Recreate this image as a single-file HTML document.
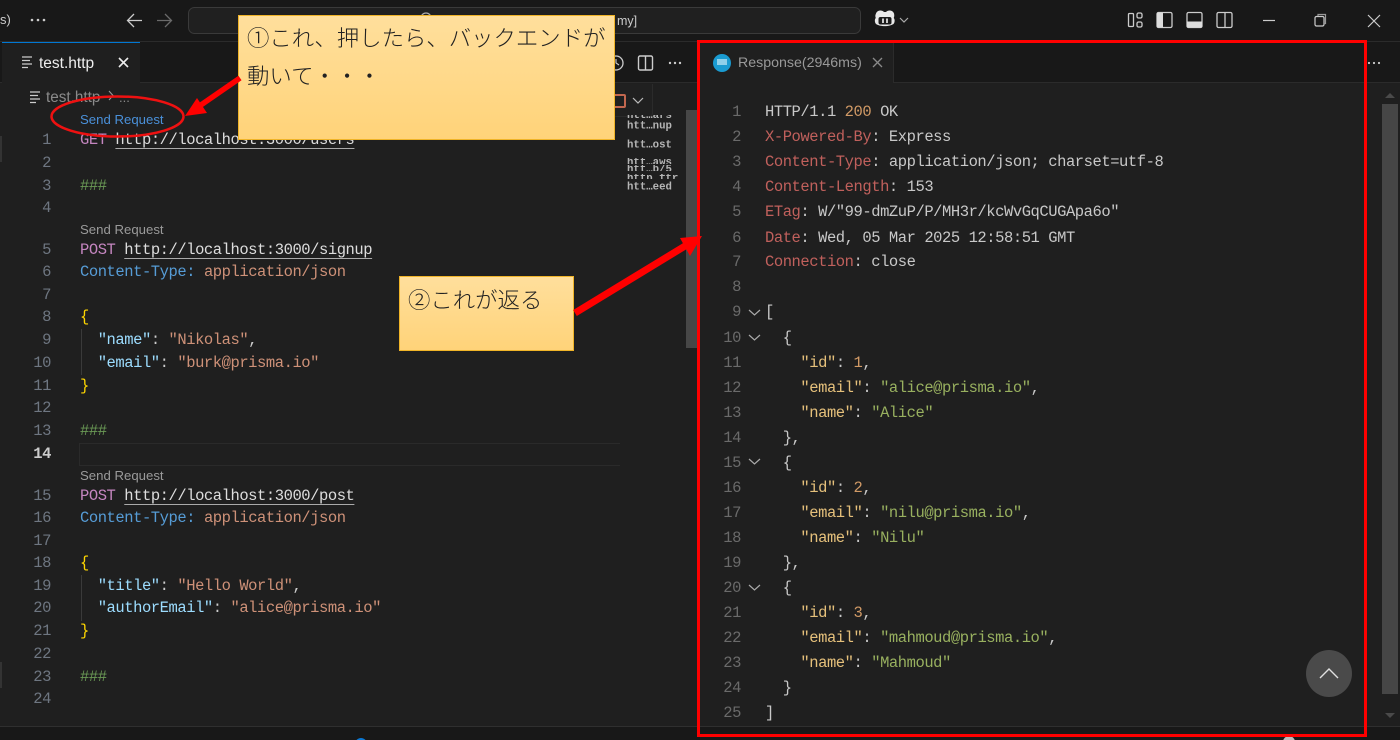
<!DOCTYPE html>
<html><head><meta charset="utf-8">
<style>
html,body{margin:0;padding:0;background:#181818;}
#r{position:relative;width:1400px;height:740px;overflow:hidden;background:#181818;font-family:"Liberation Mono",monospace;font-size:15.5px;letter-spacing:-.45px;color:#ccc;}
.a{position:absolute;}
.l{position:absolute;white-space:pre;line-height:20px;height:20px;}
.n{position:absolute;text-align:right;line-height:20px;height:20px;color:#6e7681;font-family:"Liberation Mono",monospace;font-size:15.5px;letter-spacing:-.45px;}
.rn{color:#6a6a6a;}
.ui{font-family:"Liberation Sans",sans-serif;letter-spacing:0;}
.sr{position:absolute;left:80px;font:13.2px/16px "Liberation Sans",sans-serif;letter-spacing:0;color:#9a9a9a;white-space:pre;}
.m{color:#c586c0}.u{color:#ddd;text-decoration:underline;text-underline-offset:4px;text-decoration-color:#aaa}.h{color:#569cd6}.s{color:#ce9178}.c{color:#6a9955}
.y{color:#ffd700}.k{color:#9cdcfe}.hk{color:#c0605c}.o{color:#d19a66}.jk{color:#e5c07b}.js{color:#98b05f}.g{color:#c8c8c8}
.mm{position:absolute;left:627px;font:bold 10.7px/11px "Liberation Mono",monospace;letter-spacing:0;color:#b5b5b5;white-space:pre;overflow:hidden;}
.note{position:absolute;box-sizing:border-box;border:1px solid #f0b428;background:linear-gradient(#ffdf9c,#ffd379);color:#222;font-family:"Noto Sans CJK JP","IPAGothic",sans-serif;font-weight:300;letter-spacing:0;font-size:22.4px;white-space:pre;}
</style></head><body><div id="r">

<!-- title bar -->
<div class="a ui" style="left:0;top:12px;font-size:13px;color:#ccc;">s)</div>
<svg class="a" style="left:0;top:0" width="1400" height="42" fill="none">
<g fill="#ccc"><circle cx="32" cy="20" r="1.3"/><circle cx="38" cy="20" r="1.3"/><circle cx="44" cy="20" r="1.3"/></g>
<path d="M142 20.5H128M134 14l-6.500 6.500 6.500 6.500" stroke="#ccc" stroke-width="1.300"/>
<path d="M157 20.500H171M165 14l6.500 6.500-6.500 6.500" stroke="#6a6a6a" stroke-width="1.300"/>
<rect x="188.500" y="7.500" width="672" height="26" rx="6" fill="#202020" stroke="#3a3a3a"/>
<circle cx="426" cy="18" r="5" stroke="#aaa" stroke-width="1.200"/>
<path d="M878 14.500c1-3.500 6-4 8-1.500h2c2-2.500 7-2 8 1.500 .5 2 .2 3.500-.3 4.500 1.300 1 1.300 4.500-.2 6-4 2.800-13.500 2.800-17.500 0-1.500-1.500-1.500-5-.2-6-.5-1-.8-2.500.2-4.500z" fill="#e8e8e8" transform="translate(-2 -1)"/>
<rect x="878.500" y="17" width="13" height="7.500" rx="2" fill="#1a1a1a"/><path d="M883 18.500v4.500M887 18.500v4.500" stroke="#e8e8e8" stroke-width="1.700"/>
<path d="M900 18l4 4 4-4" stroke="#aaa" stroke-width="1.200"/>
<rect x="1128.500" y="13.500" width="5" height="13" rx="1" stroke="#ccc" stroke-width="1.300"/><rect x="1137" y="13" width="5" height="5" rx="1.500" stroke="#ccc" stroke-width="1.300"/><rect x="1137" y="22" width="5" height="5" rx="1.500" stroke="#ccc" stroke-width="1.300"/>
<rect x="1157" y="12.500" width="15" height="15" rx="1.500" stroke="#ccc" stroke-width="1.300"/><rect x="1157" y="12.500" width="6" height="15" fill="#ddd"/>
<rect x="1187" y="12.500" width="15" height="15" rx="1.500" stroke="#ccc" stroke-width="1.300"/><rect x="1187" y="21.500" width="15" height="6" fill="#ddd"/>
<rect x="1217" y="12.500" width="15" height="15" rx="1.500" stroke="#ccc" stroke-width="1.300"/><path d="M1225 12.500v15" stroke="#ccc" stroke-width="1.300"/>
<path d="M1263 20.500h12" stroke="#ccc" stroke-width="1.200"/>
<rect x="1315" y="16.500" width="9" height="9.500" rx="1.500" stroke="#ccc" stroke-width="1.200"/><path d="M1318 16v-1.500h7.500v9h-1.500" stroke="#999" stroke-width="1.200"/>
<path d="M1368 15l12 12M1380 15l-12 12" stroke="#ccc" stroke-width="1.200"/>
</svg>
<div class="a ui" style="left:617px;top:13px;font-size:12.500px;line-height:17px;color:#ccc;">my]</div>

<!-- tab bars -->
<div class="a" style="left:0;top:41px;width:1400px;height:1px;background:#2b2b2b"></div>
<div class="a" style="left:0;top:82px;width:1400px;height:1px;background:#2b2b2b"></div>
<div class="a" style="left:2px;top:42px;width:138px;height:41px;background:#1f1f1f;border-top:1px solid #0078d4;box-sizing:border-box"></div>
<div class="a" style="left:697px;top:42px;width:197px;height:41px;background:#1f1f1f;border-right:1px solid #2b2b2b;box-sizing:border-box"></div>
<div class="a" style="left:0;top:83px;width:1400px;height:643px;background:#1f1f1f"></div>
<div class="a" style="left:0;top:726px;width:1400px;height:1px;background:#2f2f2f"></div>
<div class="a" style="left:0;top:727px;width:1400px;height:13px;background:#181818"></div>
<div class="a" style="left:355px;top:738px;width:12px;height:12px;border-radius:50%;background:#0a78d4"></div>
<div class="a" style="left:1283px;top:736px;width:12px;height:12px;border-radius:50%;background:#bbb"></div>
<div class="a" style="left:0;top:136px;width:2px;height:26px;background:#333"></div>
<div class="a" style="left:0;top:662px;width:2px;height:26px;background:#333"></div>

<svg class="a" style="left:0;top:40px" width="1400" height="80" fill="none">
<path d="M22 17h10M22 20.500h8M22 24h10M22 27.500h6" stroke="#ccc" stroke-width="1.200"/>
<path d="M119 18l9 9M128 18l-9 9" stroke="#eee" stroke-width="1.600"/>
<path d="M30 52h10M30 55.500h8M30 59h10M30 62.500h6" stroke="#ccc" stroke-width="1.200"/>
<path d="M109 51l4 4.500-4 4.500" stroke="#999" stroke-width="1.100"/>
<circle cx="616" cy="23" r="7" stroke="#ccc" stroke-width="1.300"/><path d="M616 19v4l3 2" stroke="#ccc" stroke-width="1.100"/>
<rect x="638.500" y="16" width="14" height="14" rx="1.500" stroke="#ccc" stroke-width="1.400"/><path d="M645.500 16v14" stroke="#ccc" stroke-width="1.400"/>
<g fill="#ccc"><circle cx="670" cy="23" r="1.200"/><circle cx="675" cy="23" r="1.200"/><circle cx="680" cy="23" r="1.200"/><circle cx="1369" cy="23" r="1.100"/><circle cx="1374" cy="23" r="1.100"/><circle cx="1379" cy="23" r="1.100"/></g>
<circle cx="722" cy="23" r="9" fill="#1a9bd1"/><rect x="717" y="19" width="10" height="6" fill="#8fd0ea"/>
<path d="M873 18l9 9M882 18l-9 9" stroke="#8a8a8a" stroke-width="1.300"/>
</svg>
<div class="a ui" style="left:39px;top:54px;font-size:15.500px;line-height:20px;color:#eee;">test.http</div>
<div class="a ui" style="left:738px;top:53px;font-size:14.200px;line-height:20px;color:#999;">Response(2946ms)</div>
<div class="a ui" style="left:46px;top:89px;font-size:15.300px;line-height:18px;color:#8a8a8a;">test.http</div>
<div class="a ui" style="left:119px;top:89px;font-size:13px;line-height:18px;color:#8a8a8a;">...</div>

<!-- find widget piece -->
<div class="a" style="left:600px;top:84px;width:52px;height:32px;background:#202020;border-right:1px solid #2b2b2b;border-bottom:1px solid #2b2b2b;border-radius:0 0 4px 0"></div>
<div class="a" style="left:600px;top:94px;width:26px;height:14px;border:2px solid #c2674f;box-sizing:border-box;border-radius:2px"></div>
<svg class="a" style="left:631px;top:95px" width="14" height="12" fill="none"><path d="M2 3l5 5 5-5" stroke="#bbb" stroke-width="1.200"/></svg>

<!-- minimap text -->
<div class="mm" style="top:115px;height:3px;line-height:3px;">htt…ars</div>
<div class="mm" style="top:119px;height:12px;line-height:12px;padding-top:0;transform:translateY(1.500px)">htt…nup</div>
<div class="mm" style="top:138px;height:12px;line-height:12px;transform:translateY(1.500px)">htt…ost</div>
<div class="mm" style="top:158px;height:6px">htt…aws</div>
<div class="mm" style="top:165px;height:6px">htt…b/5</div>
<div class="mm" style="top:174px;height:5px">http…ftr</div>
<div class="mm" style="top:180px;height:12px;line-height:12px;transform:translateY(1.500px)">htt…eed</div>

<!-- scrollbars -->
<div class="a" style="left:686px;top:110px;width:11px;height:238px;background:#474747"></div>
<div class="a" style="left:1382px;top:104px;width:16px;height:590px;background:#464646"></div>
<svg class="a" style="left:1380px;top:90px" width="20" height="640"><path d="M5 8l5-5 5 5z" fill="#4a4a4a"/><path d="M5 623l5 5 5-5z" fill="#4a4a4a"/></svg>

<!-- left editor -->
<div class="a" style="left:79px;top:443px;width:541px;height:23px;box-sizing:border-box;border:1px solid #2a2a2a;border-right:0"></div>
<div class="a" style="left:81px;top:329px;width:1px;height:46px;background:#3a3a3a"></div>
<div class="a" style="left:81px;top:575px;width:1px;height:46px;background:#3a3a3a"></div>

<div class="n" style="left:20px;width:31px;top:130px;">1</div>
<div class="n" style="left:20px;width:31px;top:153px;">2</div>
<div class="n" style="left:20px;width:31px;top:176px;">3</div>
<div class="n" style="left:20px;width:31px;top:198px;">4</div>
<div class="n" style="left:20px;width:31px;top:240px;">5</div>
<div class="n" style="left:20px;width:31px;top:262px;">6</div>
<div class="n" style="left:20px;width:31px;top:285px;">7</div>
<div class="n" style="left:20px;width:31px;top:307px;">8</div>
<div class="n" style="left:20px;width:31px;top:330px;">9</div>
<div class="n" style="left:20px;width:31px;top:353px;">10</div>
<div class="n" style="left:20px;width:31px;top:376px;">11</div>
<div class="n" style="left:20px;width:31px;top:398px;">12</div>
<div class="n" style="left:20px;width:31px;top:421px;">13</div>
<div class="n" style="left:20px;width:31px;top:444px;color:#ccc;font-weight:bold">14</div>
<div class="n" style="left:20px;width:31px;top:486px;">15</div>
<div class="n" style="left:20px;width:31px;top:508px;">16</div>
<div class="n" style="left:20px;width:31px;top:531px;">17</div>
<div class="n" style="left:20px;width:31px;top:553px;">18</div>
<div class="n" style="left:20px;width:31px;top:576px;">19</div>
<div class="n" style="left:20px;width:31px;top:598px;">20</div>
<div class="n" style="left:20px;width:31px;top:621px;">21</div>
<div class="n" style="left:20px;width:31px;top:644px;">22</div>
<div class="n" style="left:20px;width:31px;top:667px;">23</div>
<div class="n" style="left:20px;width:31px;top:689px;">24</div>

<div class="sr" style="top:112px;color:#4a90d9">Send Request</div>
<div class="l" style="left:80px;top:130px"><span class="m">GET</span> <span class="u">http://localhost:3000/users</span></div>
<div class="l c" style="left:80px;top:176px">###</div>
<div class="sr" style="top:222px">Send Request</div>
<div class="l" style="left:80px;top:240px"><span class="m">POST</span> <span class="u">http://localhost:3000/signup</span></div>
<div class="l" style="left:80px;top:262px"><span class="h">Content-Type:</span> <span class="s">application/json</span></div>
<div class="l y" style="left:80px;top:307px">{</div>
<div class="l" style="left:80px;top:330px">  <span class="k">"name"</span>: <span class="s">"Nikolas"</span>,</div>
<div class="l" style="left:80px;top:353px">  <span class="k">"email"</span>: <span class="s">"burk@prisma.io"</span></div>
<div class="l y" style="left:80px;top:376px">}</div>
<div class="l c" style="left:80px;top:421px">###</div>
<div class="sr" style="top:468px">Send Request</div>
<div class="l" style="left:80px;top:486px"><span class="m">POST</span> <span class="u">http://localhost:3000/post</span></div>
<div class="l" style="left:80px;top:508px"><span class="h">Content-Type:</span> <span class="s">application/json</span></div>
<div class="l y" style="left:80px;top:553px">{</div>
<div class="l" style="left:80px;top:576px">  <span class="k">"title"</span>: <span class="s">"Hello World"</span>,</div>
<div class="l" style="left:80px;top:598px">  <span class="k">"authorEmail"</span>: <span class="s">"alice@prisma.io"</span></div>
<div class="l y" style="left:80px;top:621px">}</div>
<div class="l c" style="left:80px;top:667px">###</div>

<!-- right editor -->
<div class="n rn" style="left:710px;width:31px;top:102px;">1</div>
<div class="n rn" style="left:710px;width:31px;top:127px;">2</div>
<div class="n rn" style="left:710px;width:31px;top:152px;">3</div>
<div class="n rn" style="left:710px;width:31px;top:177px;">4</div>
<div class="n rn" style="left:710px;width:31px;top:202px;">5</div>
<div class="n rn" style="left:710px;width:31px;top:228px;">6</div>
<div class="n rn" style="left:710px;width:31px;top:252px;">7</div>
<div class="n rn" style="left:710px;width:31px;top:277px;">8</div>
<div class="n rn" style="left:710px;width:31px;top:302px;">9</div>
<div class="n rn" style="left:710px;width:31px;top:328px;">10</div>
<div class="n rn" style="left:710px;width:31px;top:353px;">11</div>
<div class="n rn" style="left:710px;width:31px;top:378px;">12</div>
<div class="n rn" style="left:710px;width:31px;top:403px;">13</div>
<div class="n rn" style="left:710px;width:31px;top:428px;">14</div>
<div class="n rn" style="left:710px;width:31px;top:453px;">15</div>
<div class="n rn" style="left:710px;width:31px;top:478px;">16</div>
<div class="n rn" style="left:710px;width:31px;top:503px;">17</div>
<div class="n rn" style="left:710px;width:31px;top:528px;">18</div>
<div class="n rn" style="left:710px;width:31px;top:553px;">19</div>
<div class="n rn" style="left:710px;width:31px;top:578px;">20</div>
<div class="n rn" style="left:710px;width:31px;top:603px;">21</div>
<div class="n rn" style="left:710px;width:31px;top:628px;">22</div>
<div class="n rn" style="left:710px;width:31px;top:653px;">23</div>
<div class="n rn" style="left:710px;width:31px;top:678px;">24</div>
<div class="n rn" style="left:710px;width:31px;top:703px;">25</div>

<svg class="a" style="left:745px;top:300px" width="20" height="300" fill="none" stroke="#aaa" stroke-width="1.200">
<path d="M4 10l5.500 5 5.500-5"/><path d="M4 35l5.500 5 5.500-5"/><path d="M4 159l5.500 5 5.500-5"/><path d="M4 285l5.500 5 5.500-5"/>
</svg>

<div class="l g" style="left:765px;top:102px">HTTP/1.1 <span class="o">200</span> OK</div>
<div class="l g" style="left:765px;top:127px"><span class="hk">X-Powered-By</span>: Express</div>
<div class="l g" style="left:765px;top:152px"><span class="hk">Content-Type</span>: application/json; charset=utf-8</div>
<div class="l g" style="left:765px;top:177px"><span class="hk">Content-Length</span>: 153</div>
<div class="l g" style="left:765px;top:202px"><span class="hk">ETag</span>: W/"99-dmZuP/P/MH3r/kcWvGqCUGApa6o"</div>
<div class="l g" style="left:765px;top:228px"><span class="hk">Date</span>: Wed, 05 Mar 2025 12:58:51 GMT</div>
<div class="l g" style="left:765px;top:252px"><span class="hk">Connection</span>: close</div>
<div class="l g" style="left:765px;top:302px">[</div>
<div class="l g" style="left:765px;top:328px">  {</div>
<div class="l g" style="left:765px;top:353px">    <span class="jk">"id"</span>: <span class="o">1</span>,</div>
<div class="l g" style="left:765px;top:378px">    <span class="jk">"email"</span>: <span class="js">"alice@prisma.io"</span>,</div>
<div class="l g" style="left:765px;top:403px">    <span class="jk">"name"</span>: <span class="js">"Alice"</span></div>
<div class="l g" style="left:765px;top:428px">  },</div>
<div class="l g" style="left:765px;top:453px">  {</div>
<div class="l g" style="left:765px;top:478px">    <span class="jk">"id"</span>: <span class="o">2</span>,</div>
<div class="l g" style="left:765px;top:503px">    <span class="jk">"email"</span>: <span class="js">"nilu@prisma.io"</span>,</div>
<div class="l g" style="left:765px;top:528px">    <span class="jk">"name"</span>: <span class="js">"Nilu"</span></div>
<div class="l g" style="left:765px;top:553px">  },</div>
<div class="l g" style="left:765px;top:578px">  {</div>
<div class="l g" style="left:765px;top:603px">    <span class="jk">"id"</span>: <span class="o">3</span>,</div>
<div class="l g" style="left:765px;top:628px">    <span class="jk">"email"</span>: <span class="js">"mahmoud@prisma.io"</span>,</div>
<div class="l g" style="left:765px;top:653px">    <span class="jk">"name"</span>: <span class="js">"Mahmoud"</span></div>
<div class="l g" style="left:765px;top:678px">  }</div>
<div class="l g" style="left:765px;top:703px">]</div>

<!-- scroll-to-top -->
<div class="a" style="left:1306px;top:650px;width:46px;height:47px;border-radius:50%;background:#4a4a4a"></div>
<svg class="a" style="left:1318px;top:664px" width="22" height="18" fill="none"><path d="M2 14l9-9 9 9" stroke="#e0e0e0" stroke-width="1.400"/></svg>

<!-- notes -->
<div class="note" style="left:238px;top:15px;width:377px;height:125px;padding:2px 0 0 8px;line-height:38px;">①これ、押したら、バックエンドが
動いて・・・</div>
<div class="note" style="left:399px;top:276px;width:175px;height:75px;padding:6px 0 0 8px;line-height:32px;">②これが返る</div>

<!-- annotations -->
<svg class="a" style="left:0;top:0" width="1400" height="740" fill="none">
<rect x="698.500" y="41.500" width="667" height="694" stroke="#f00" stroke-width="3"/>
<ellipse cx="117.500" cy="116.500" rx="66" ry="20" stroke="#ee1111" stroke-width="2.500"/>
<path d="M240 78L198 107" stroke="#f00" stroke-width="5.500"/>
<path d="M185 116L197 98 207 113z" fill="#f00"/>
<path d="M575 313L690 243" stroke="#f00" stroke-width="7"/>
<path d="M702 236L680 238 690 256z" fill="#f00"/>
</svg>
</div></body></html>
